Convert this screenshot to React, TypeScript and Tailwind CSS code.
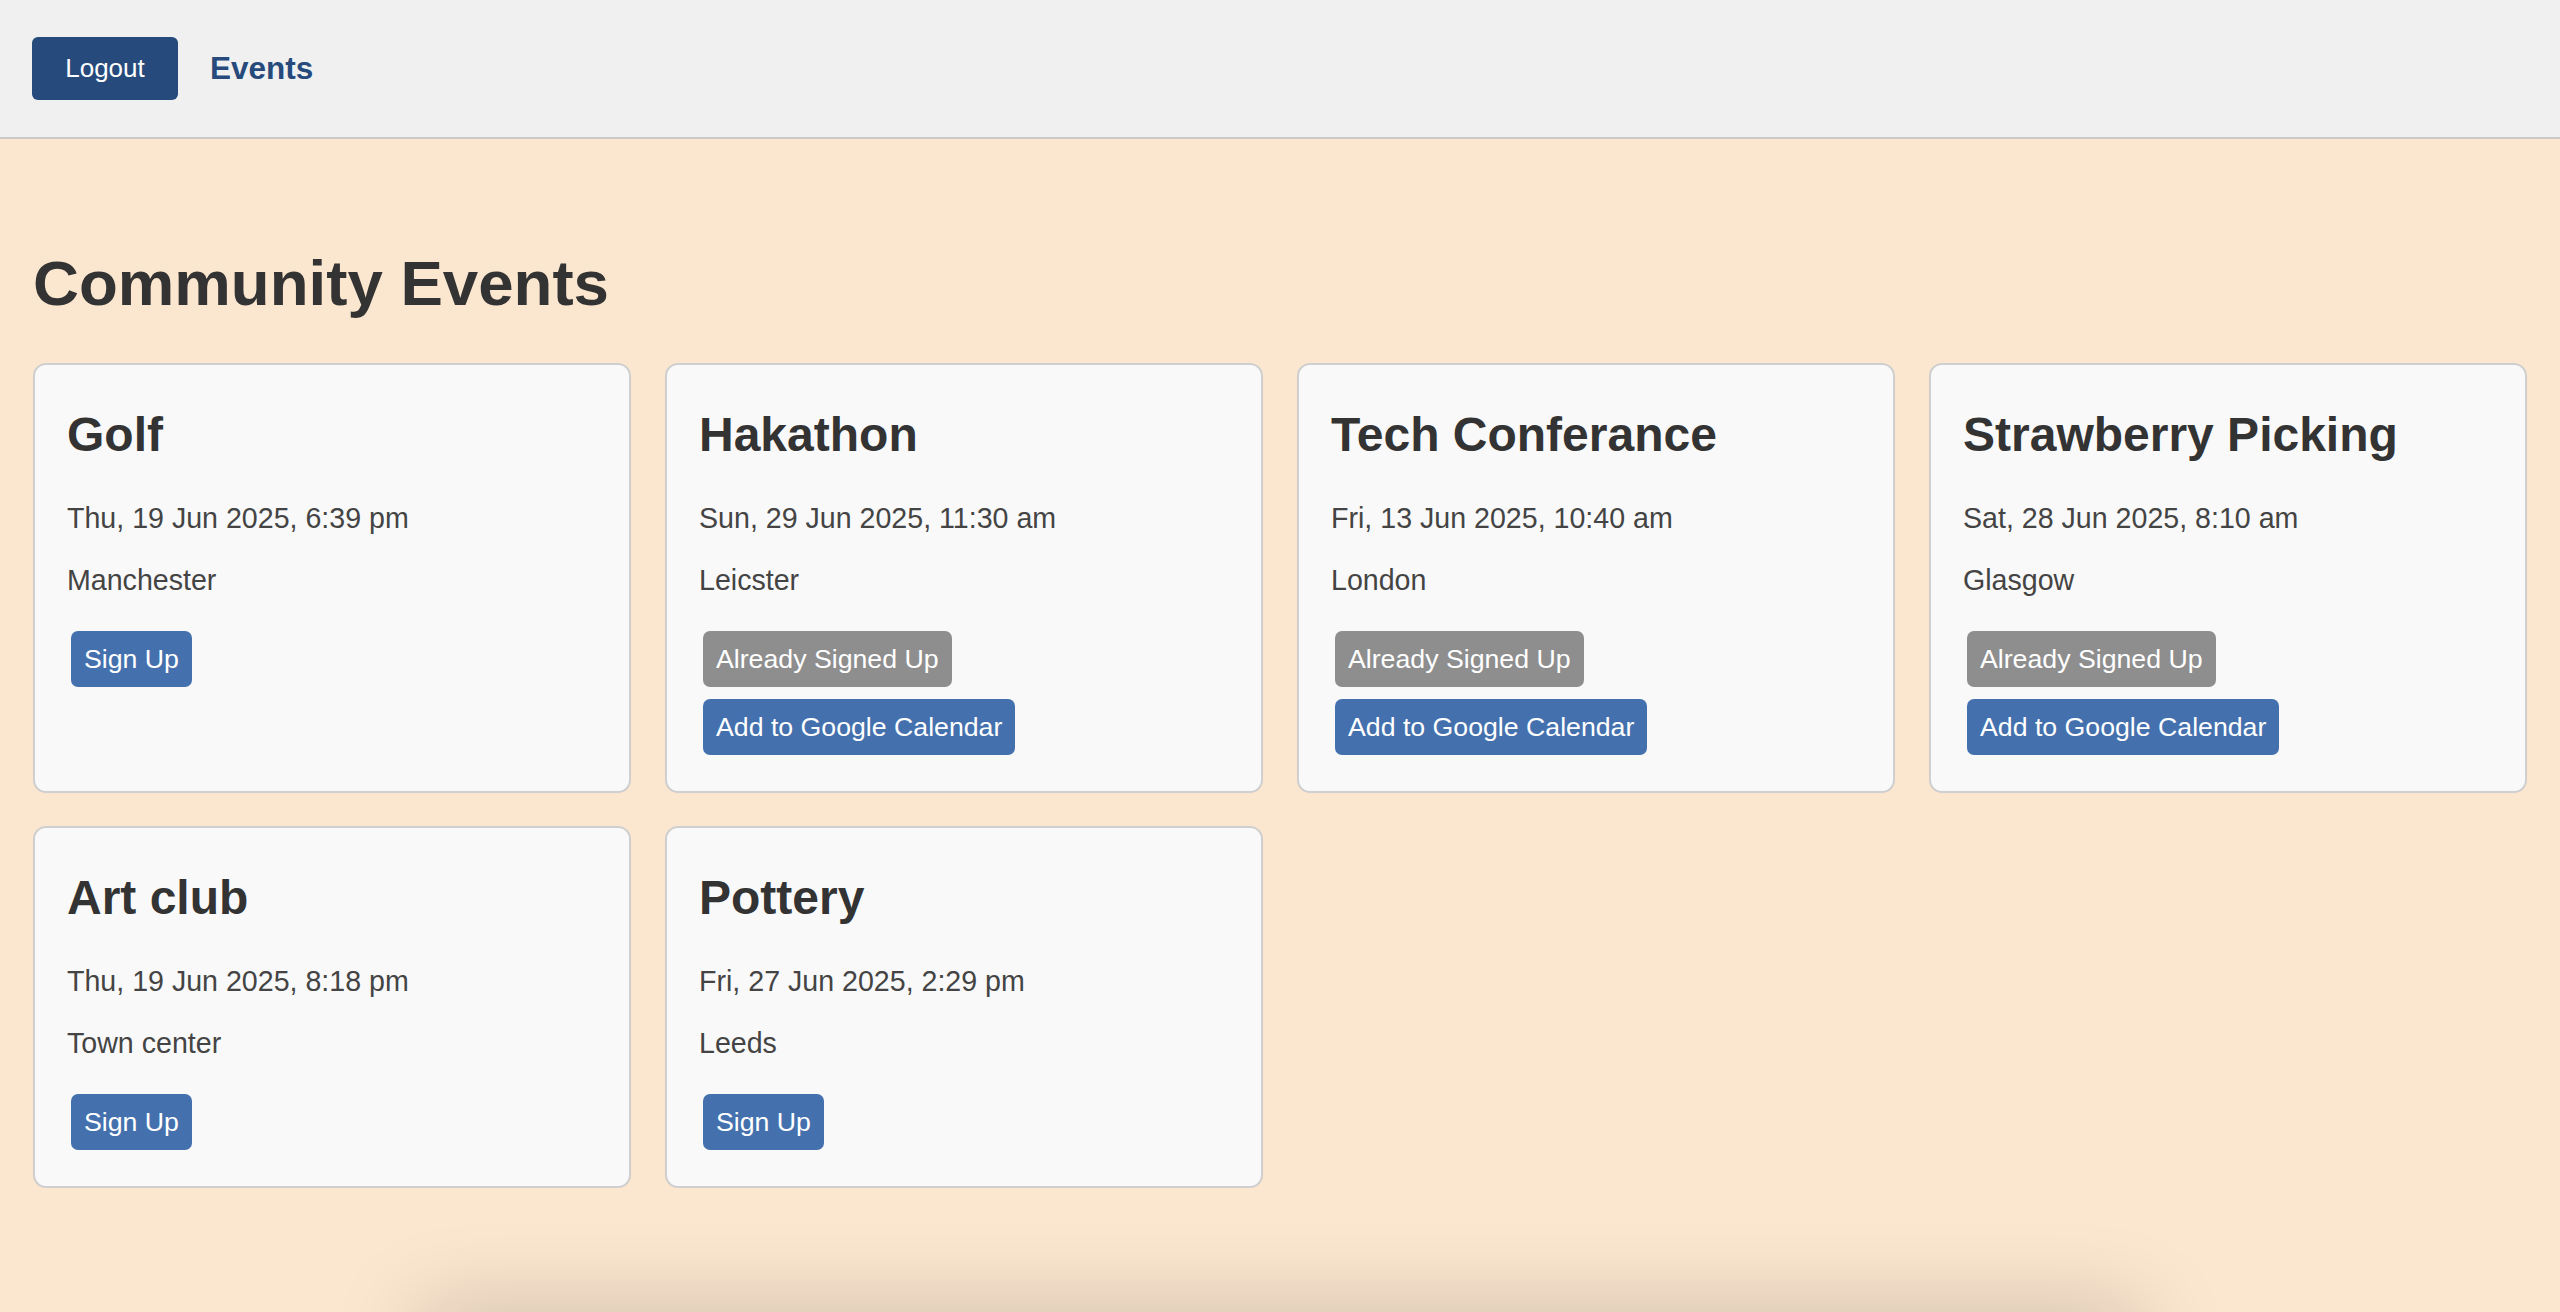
const events = [
  { title: "Golf", date: "Thu, 19 Jun 2025, 6:39 pm", place: "Manchester", signedUp: false },
  { title: "Hakathon", date: "Sun, 29 Jun 2025, 11:30 am", place: "Leicster", signedUp: true },
  { title: "Tech Conferance", date: "Fri, 13 Jun 2025, 10:40 am", place: "London", signedUp: true },
  { title: "Strawberry Picking", date: "Sat, 28 Jun 2025, 8:10 am", place: "Glasgow", signedUp: true },
  { title: "Art club", date: "Thu, 19 Jun 2025, 8:18 pm", place: "Town center", signedUp: false },
  { title: "Pottery", date: "Fri, 27 Jun 2025, 2:29 pm", place: "Leeds", signedUp: false },
];

function EventCard({ title, date, place, signedUp }: (typeof events)[number]) {
  return (
    <div className="bg-[#f9f9f9] border-2 border-[#cfcfcf] rounded-[13px] pt-[42px] px-[32px] pb-[36px]">
      <h2 className="text-[48px] leading-[55px] font-bold text-[#333]">{title}</h2>
      <p className="mt-[40px] text-[28.6px] leading-[33px] text-[#444]">{date}</p>
      <p className="mt-[29px] text-[28.6px] leading-[33px] text-[#444]">{place}</p>

      <div className="mt-[34px] ml-[4px] flex flex-col items-start gap-[12px]">
        {signedUp ? (
          <>
            <button className="h-[56px] px-[13px] rounded-[7px] bg-[#8e8e8f] text-white text-[26.7px]">
              Already Signed Up
            </button>
            <button className="h-[56px] px-[13px] rounded-[7px] bg-[#4471ae] text-white text-[26.7px]">
              Add to Google Calendar
            </button>
          </>
        ) : (
          <button className="h-[56px] px-[13px] rounded-[7px] bg-[#4471ae] text-white text-[26.7px]">
            Sign Up
          </button>
        )}
      </div>
    </div>
  );
}

export default function App() {
  return (
    <div className="h-[1312px] overflow-hidden bg-[#fbe6cf] font-['Liberation_Sans',Arial,sans-serif]">
      {/* Top nav */}
      <nav className="h-[139px] bg-[#f0f0f0] border-b-2 border-[#cbcbcb] flex items-center gap-[32px] px-[32px]">
        <button className="w-[146px] h-[63px] rounded-[6px] bg-[#264a7c] text-white text-[26px]">Logout</button>
        <a className="text-[31.5px] font-bold text-[#264a7c]">Events</a>
      </nav>

      <main className="px-[33px] pt-[107px]">
        <h1 className="text-[63.6px] leading-[73px] font-bold text-[#333]">Community Events</h1>

        <div className="mt-[44px] grid grid-cols-4 gap-x-[34px] gap-y-[33px]">
          {events.map((e) => (
            <EventCard key={e.title} {...e} />
          ))}
        </div>
      </main>

      {/* edge of the box below the fold */}
      <div className="mt-[126px] mx-auto w-[1720px] h-[60px] bg-[#fbe6cf] shadow-[0_0_90px_rgba(0,0,0,0.22)]" />
    </div>
  );
}
